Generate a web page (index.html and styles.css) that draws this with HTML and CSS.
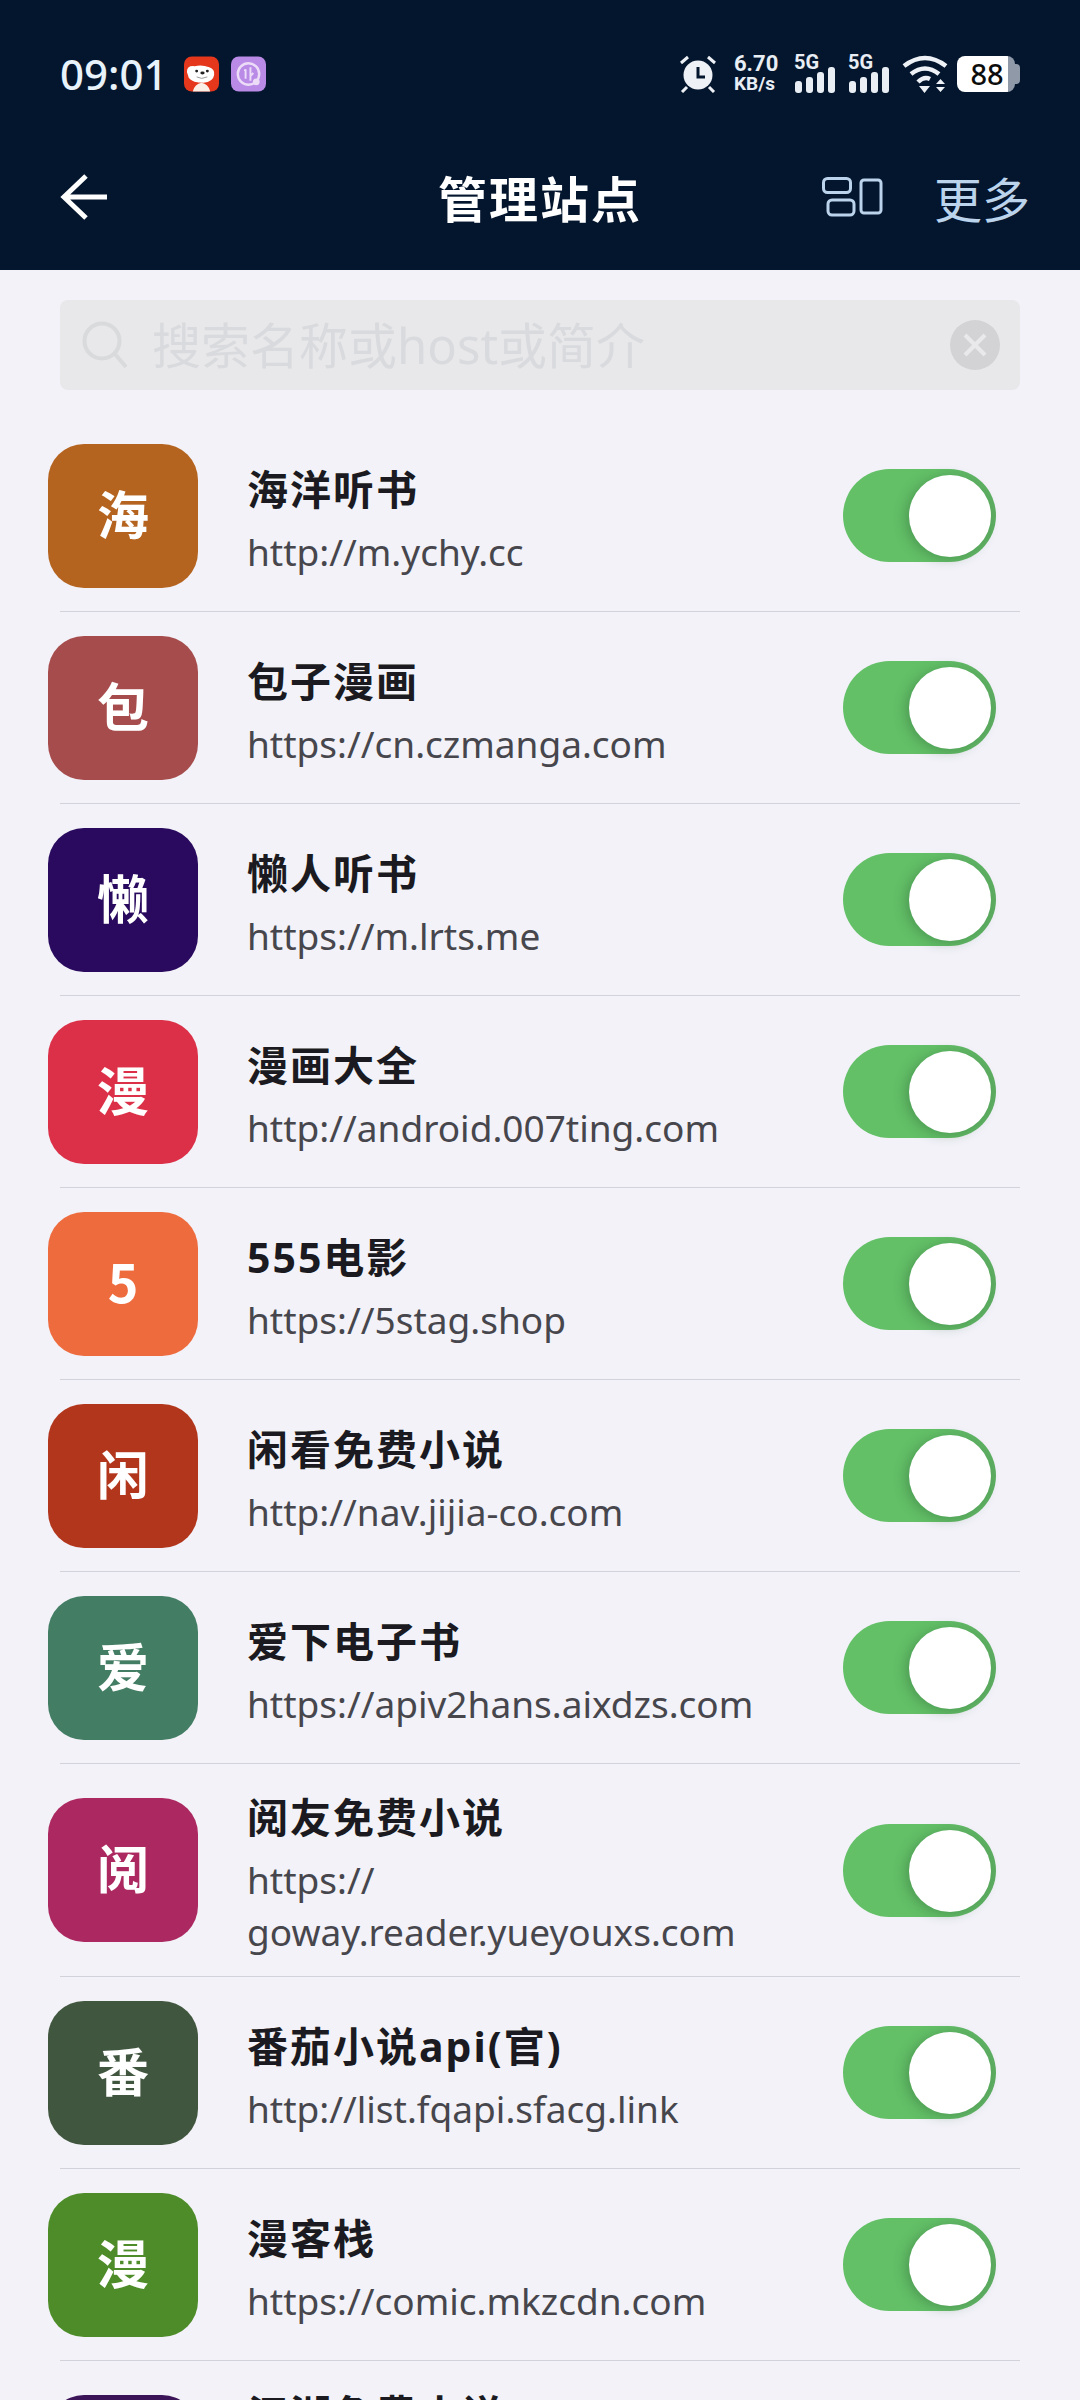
FILE: index.html
```html
<!DOCTYPE html>
<html lang="zh-CN">
<head>
  <meta charset="UTF-8" />
  <meta name="viewport" content="width=device-width, initial-scale=1.0"/>
  <title>管理站点</title>
  <link rel="stylesheet" href="styles.css">
</head>
<body>
  <header>
    <div class="status-bar">
      <div class="status-left">
        <span class="time">09:01</span>
        <svg class="app-icon" viewBox="0 0 36 36">
          <rect width="36" height="36" rx="8" fill="#e5371b"/>
          <path d="M3 16 Q3 9 11 10 Q18 8 26 11 Q32 13 31 19 Q30 26 20 27 Q9 27 5 22 Z" fill="#fff"/>
          <path d="M9 36 Q11 28 18 27 Q25 28 27 36 Z" fill="#fbeee6"/>
          <circle cx="13" cy="15" r="1.5" fill="#222"/>
          <circle cx="24" cy="15" r="1.5" fill="#222"/>
          <ellipse cx="19" cy="17" rx="2.2" ry="1.5" fill="#222"/>
          <path d="M13 21 Q18 24 24 21" fill="none" stroke="#999" stroke-width="1"/>
        </svg>
        <svg class="app-icon" viewBox="0 0 36 36">
          <rect width="36" height="36" rx="8" fill="#b98ae6"/>
          <circle cx="18" cy="18" r="11" fill="none" stroke="#ecdcf8" stroke-width="2.5"/>
          <path d="M15 13 V23 M14 15 L15 13 M20 11 V25 M20 20 L23 17" fill="none" stroke="#ecdcf8" stroke-width="2"/>
          <circle cx="26" cy="26" r="3.5" fill="#ecdcf8"/>
        </svg>
      </div>
      <div class="status-right">
        <svg class="alarm" viewBox="0 0 36 38">
          <circle cx="18" cy="20" r="14.5" fill="#eef2f6"/>
          <path d="M18 12 V22 H25" fill="none" stroke="#04162e" stroke-width="3"/>
          <path d="M1 8 L8 2 M35 8 L28 2 M7 32 L2 37 M29 32 L34 37" stroke="#eef2f6" stroke-width="3"/>
        </svg>
        <div class="speed"><span>6.70</span><span>KB/s</span></div>
        <div class="signal">
          <span class="net">5G</span>
          <svg viewBox="0 0 43 26"><rect x="1" y="14" width="7" height="12" rx="3"/><rect x="12" y="10" width="7" height="16" rx="3"/><rect x="23" y="5" width="7" height="21" rx="3"/><rect x="34" y="0" width="7" height="26" rx="3"/></svg>
        </div>
        <div class="signal">
          <span class="net">5G</span>
          <svg viewBox="0 0 43 26"><rect x="1" y="14" width="7" height="12" rx="3"/><rect x="12" y="10" width="7" height="16" rx="3"/><rect x="23" y="5" width="7" height="21" rx="3"/><rect x="34" y="0" width="7" height="26" rx="3"/></svg>
        </div>
        <svg class="wifi" viewBox="0 0 46 38">
          <path d="M2 11 Q23 -5 44 11 M9 19 Q23 8 37 19 M16 27 Q22 21 28 24" fill="none" stroke="#eef2f6" stroke-width="4.5"/>
          <path d="M17 31 H28 L22.500 38 Z M34 29 L38.500 24 L43 29 Z M34 32 H43 L38.500 37 Z" fill="#eef2f6"/>
        </svg>
        <div class="battery"><span class="battery-level">88</span></div>
      </div>
    </div>
    <nav>
      <svg class="back" viewBox="0 0 48 48"><path d="M26 3 L4 24 L26 45 M4 24 H47" fill="none" stroke="#fff" stroke-width="5"/></svg>
      <h1>管理站点</h1>
      <div class="nav-actions">
        <svg class="layout-icon" viewBox="0 0 61 40">
          <rect x="1.500" y="1.500" width="27" height="14" rx="4"/>
          <rect x="6" y="23" width="26" height="15" rx="4"/>
          <rect x="39" y="3" width="20" height="33" rx="3"/>
        </svg>
        <span class="more">更多</span>
      </div>
    </nav>
  </header>

  <div class="search">
    <svg class="search-icon" viewBox="0 0 46 48"><circle cx="20" cy="20" r="17.500"/><path d="M33 33 L44 46"/></svg>
    <span class="placeholder">搜索名称或host或简介</span>
    <svg class="clear" viewBox="0 0 50 50"><circle cx="25" cy="25" r="25" fill="#d3d3d5"/><path d="M15 15 L35 35 M35 15 L15 35" stroke="#e9e9eb" stroke-width="4"/></svg>
  </div>

  <div class="site-list">
    <div class="site">
      <div class="site-icon c-orange">海</div>
      <div class="site-text"><h3>海洋听书</h3><p>http://m.ychy.cc</p></div>
      <div class="switch"><span class="knob"></span></div>
    </div>
    <div class="site">
      <div class="site-icon c-rose">包</div>
      <div class="site-text"><h3>包子漫画</h3><p>https://cn.czmanga.com</p></div>
      <div class="switch"><span class="knob"></span></div>
    </div>
    <div class="site">
      <div class="site-icon c-indigo">懒</div>
      <div class="site-text"><h3>懒人听书</h3><p>https://m.lrts.me</p></div>
      <div class="switch"><span class="knob"></span></div>
    </div>
    <div class="site">
      <div class="site-icon c-red">漫</div>
      <div class="site-text"><h3>漫画大全</h3><p>http://android.007ting.com</p></div>
      <div class="switch"><span class="knob"></span></div>
    </div>
    <div class="site">
      <div class="site-icon c-coral">5</div>
      <div class="site-text"><h3>555电影</h3><p>https://5stag.shop</p></div>
      <div class="switch"><span class="knob"></span></div>
    </div>
    <div class="site">
      <div class="site-icon c-rust">闲</div>
      <div class="site-text"><h3>闲看免费小说</h3><p>http://nav.jijia-co.com</p></div>
      <div class="switch"><span class="knob"></span></div>
    </div>
    <div class="site">
      <div class="site-icon c-teal">爱</div>
      <div class="site-text"><h3>爱下电子书</h3><p>https://apiv2hans.aixdzs.com</p></div>
      <div class="switch"><span class="knob"></span></div>
    </div>
    <div class="site">
      <div class="site-icon c-berry">阅</div>
      <div class="site-text"><h3>阅友免费小说</h3><p>https://<br>goway.reader.yueyouxs.com</p></div>
      <div class="switch"><span class="knob"></span></div>
    </div>
    <div class="site">
      <div class="site-icon c-moss">番</div>
      <div class="site-text"><h3>番茄小说api(官)</h3><p>http://list.fqapi.sfacg.link</p></div>
      <div class="switch"><span class="knob"></span></div>
    </div>
    <div class="site">
      <div class="site-icon c-green">漫</div>
      <div class="site-text"><h3>漫客栈</h3><p>https://comic.mkzcdn.com</p></div>
      <div class="switch"><span class="knob"></span></div>
    </div>
    <div class="site">
      <div class="site-icon c-plum"></div>
      <div class="site-text"><h3>江湖免费小说</h3><p>https://<br>m.jianghu.com</p></div>
      <div class="switch"><span class="knob"></span></div>
    </div>
  </div>
</body>
</html>
```

FILE: styles.css
```css
* { box-sizing: border-box; }
body {
  margin: 0;
  height: 2400px;
  overflow: hidden;
  background-color: #f2f2f8;
  font-family: "Noto Sans", "Noto Sans CJK SC", sans-serif;
}
header {
  background-color: #04162e;
  height: 270px;
  padding: 0 60px;
}

/* status bar */
.status-bar {
  display: flex;
  justify-content: space-between;
  align-items: center;
  padding-top: 50px;
  height: 97px;
}
.status-left {
  display: flex;
  align-items: center;
  gap: 12px;
}
.time {
  color: #e8f2fa;
  font-size: 42px;
  font-weight: 500;
  margin-right: 4px;
}
.app-icon { width: 35px; height: 36px; }
.status-right {
  display: flex;
  align-items: center;
  gap: 11px;
}
.alarm { width: 36px; height: 38px; margin-right: 7px; }
.speed {
  display: flex;
  flex-direction: column;
  color: #e8eef4;
  font-family: Roboto, sans-serif;
  font-size: 22px;
  font-weight: 700;
  line-height: 20px;
  width: 45px;
  margin-right: 4px;
}
.speed span:last-child { font-size: 19px; }
.signal {
  position: relative;
  width: 43px;
  height: 38px;
}
.signal svg {
  position: absolute;
  left: 0;
  bottom: 0;
  width: 43px;
  height: 26px;
  fill: #e8eef4;
}
.net {
  position: absolute;
  left: 0;
  top: -3px;
  color: #e8eef4;
  font-family: Roboto, sans-serif;
  font-size: 20px;
  font-weight: 700;
  line-height: 20px;
}
.wifi { width: 46px; height: 38px; }
.battery {
  position: relative;
  width: 58px;
  height: 36px;
  margin-left: -2px;
  margin-right: 5px;
  border-radius: 8px;
  background: linear-gradient(to right, #fff 0, #fff 88%, #8f99a8 88%);
}
.battery::after {
  content: "";
  position: absolute;
  top: 8px;
  right: -5px;
  width: 5px;
  height: 20px;
  border-radius: 0 4px 4px 0;
  background-color: #8f99a8;
}
.battery-level {
  display: block;
  width: 60px;
  text-align: center;
  color: #0c0c0c;
  font-size: 29px;
  font-weight: 500;
  line-height: 36px;
}

/* title row */
nav {
  display: grid;
  grid-template-columns: 1fr auto 1fr;
  align-items: center;
  height: 66px;
  margin-top: 67px;
}
.back { width: 48px; height: 48px; }
nav h1 {
  margin: 0;
  color: #fff;
  font-family: "Noto Sans CJK SC", sans-serif;
  font-size: 49px;
  font-weight: 700;
  letter-spacing: 2px;
  line-height: 66px;
}
.nav-actions {
  display: flex;
  justify-content: flex-end;
  align-items: center;
  gap: 51px;
  margin-right: -10px;
}
.layout-icon {
  width: 61px;
  height: 40px;
  fill: none;
  stroke: #bcd3ec;
  stroke-width: 3;
}
.more {
  color: #bcd3ec;
  font-family: "Noto Sans CJK SC", sans-serif;
  font-size: 48px;
  line-height: 66px;
}

/* search */
.search {
  display: flex;
  align-items: center;
  height: 90px;
  margin: 30px 60px 0;
  padding: 0 20px 0 22px;
  border-radius: 8px;
  background-color: #e8e8ea;
}
.search-icon {
  width: 46px;
  height: 48px;
  fill: none;
  stroke: #d9dadc;
  stroke-width: 4;
  flex-shrink: 0;
}
.placeholder {
  flex: 1;
  margin-left: 24px;
  color: #d9dadd;
  font-size: 49px;
  line-height: 90px;
}
.clear { width: 50px; height: 50px; flex-shrink: 0; }

/* list */
.site-list { padding: 30px 60px 0; }
.site {
  display: flex;
  align-items: center;
  min-height: 192px;
  padding: 18px 0;
  border-bottom: 1px solid #d2d2da;
}
.site-icon {
  flex-shrink: 0;
  width: 150px;
  height: 144px;
  margin-left: -12px;
  border-radius: 36px;
  color: #fff;
  font-family: "Noto Sans CJK SC", sans-serif;
  font-size: 52px;
  font-weight: 700;
  line-height: 138px;
  text-align: center;
}
.c-orange { background-color: #b56420; }
.c-rose { background-color: #a64c4c; }
.c-indigo { background-color: #2a0a5e; }
.c-red { background-color: #dc3048; }
.c-coral { background-color: #ee6b3e; }
.c-rust { background-color: #b2361c; }
.c-teal { background-color: #437d64; }
.c-berry { background-color: #ac2860; }
.c-moss { background-color: #41563f; }
.c-green { background-color: #4d8c28; }
.c-plum { background-color: #3c1458; }
.site-text {
  flex: 1;
  min-width: 0;
  margin-left: 49px;
  padding: 6px 30px 0 0;
}
.site-text h3 {
  margin: 0;
  color: #1a1a20;
  font-size: 41px;
  font-weight: 700;
  letter-spacing: 2px;
  line-height: 58px;
}
.site-text p {
  margin: 8px 0 0;
  color: #46464c;
  font-size: 37px;
  line-height: 52px;
}
.switch {
  flex-shrink: 0;
  width: 153px;
  height: 93px;
  margin-right: 24px;
  padding: 6px 5px 0 0;
  display: flex;
  justify-content: flex-end;
  border-radius: 47px;
  background: linear-gradient(to right, #63c067 60%, #5dad62);
}
.knob {
  width: 82px;
  height: 82px;
  border-radius: 50%;
  background-color: #fff;
  box-shadow: -4px 2px 12px rgba(40, 90, 50, 0.35);
}
```
